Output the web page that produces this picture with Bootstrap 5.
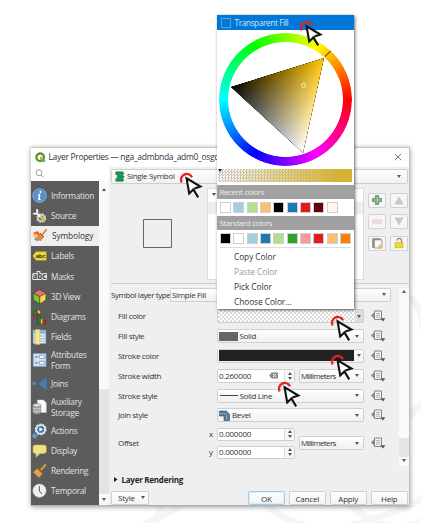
<!DOCTYPE html>
<html lang="en">
<head>
<meta charset="utf-8">
<title>Layer Properties</title>
<link rel="stylesheet" href="https://cdn.jsdelivr.net/npm/bootstrap@5.3.0/dist/css/bootstrap.min.css">
<style>
body{width:421px;height:523px;overflow:hidden;background:#fff;font-family:"Open Sans","Noto Sans",sans-serif;font-size:8px;line-height:10px;color:#333;letter-spacing:-.32px}
svg{display:block;flex:none}
.stage{width:421px;height:523px;padding:147px 0 0 31px}
.backdrop{left:0;top:0}
.win{width:379px;height:359px;background:#efefef;box-shadow:0 1px 5px rgba(0,0,0,.4);border-bottom:1px solid #b8b09a;border-right:1px solid #c4c0b4;border-top:1px solid #cbc5b5}
.titlebar{height:19px;background:#fff;padding:0 9px 0 4px;font-size:8.5px;letter-spacing:-.32px;color:#333}
.side{width:78px}
.search{height:14px;background:#fff;padding-left:4px}
.items{width:68px;background:#5c5c5c;color:#e2e2e2;padding-top:5px;font-size:8.3px;line-height:11.5px;letter-spacing:-.27px}
.items>div{height:20.2px;display:flex;align-items:center;gap:4px;padding-left:1px}
.items>div.two{height:26.7px}
.items>div.on{background:#efefef;color:#333;gap:5px;letter-spacing:-.1px}
.sbar{width:10px;background:#fafafa}
.thumb{background:#e4e4e4}
.arr{width:0;height:0;border:2.6px solid transparent;border-bottom:0;border-top:3.6px solid #555;flex:none}
.arr.up{border-top:0;border-bottom:3.6px solid #555}
.ctl{height:14px;border:1px solid #cfcfcf;border-radius:1.5px;background:linear-gradient(#fefefe,#f1f1f1);display:flex;align-items:center;padding:0 4px 0 1px;white-space:nowrap}
.ctl .arr{margin-left:auto}
.w-full{width:147px}
.rowf{height:19.8px;display:flex;align-items:center}
.lab{width:106px;padding-left:7px}
.spin{width:78px;height:13.5px;background:#fff;border:1px solid #cfcfcf;border-radius:1.5px;display:flex;align-items:center;padding-left:1px;letter-spacing:-.25px}
.steps{width:10px;height:100%;border-left:1px solid #ddd;margin-left:auto;display:flex;flex-direction:column;align-items:center;justify-content:center;gap:1.6px;background:#f7f7f7}
.steps .arr{border-left-width:2px;border-right-width:2px;border-top-width:3px}
.steps .arr.up{border-top-width:0;border-bottom-width:3px}
.checks{background:repeating-conic-gradient(#dcdcdc 0 25%,#fff 0 50%) 0 0/4px 4px}
.dd{margin-left:7px}
.mm{width:65px;margin-left:4px;letter-spacing:-.62px}
.tree{width:157px;height:92px;background:#fff;border:1px solid #dcdcdc;margin-top:4px;padding-top:13px}
.tree>div{height:12px;background:#eee}
.tools{display:grid;grid-template-columns:18px 18px;grid-auto-rows:15px;gap:6.7px 4px;margin:9px 0 0 4px}
.tools>div{border:1px solid #d2d2d2;border-radius:1px;background:#f6f6f6;display:flex;align-items:center;justify-content:center}
.pbtn{height:14.5px;width:37.5px;border:1px solid #cfcfcf;border-radius:1.5px;background:linear-gradient(#fefefe,#f3f3f3);text-align:center;line-height:13px;letter-spacing:-.2px}
.pbtn.ok{border-color:#9fcdf0;box-shadow:inset 0 0 0 .5px #bfe0f8}
.popup{left:217px;top:15px;width:137px;height:294px;background:#fff;box-shadow:1px 1px 3px rgba(0,0,0,.6);font-size:8.3px;letter-spacing:-.05px}
.pick{height:15px;background:#0078d7;color:#cfe4f7;padding-left:4px;letter-spacing:-.4px}
.pick i{width:10px;height:10px;border:1px solid #5aa0dc;margin-right:3.5px}
.wheelbox{height:139px;position:relative}
.hues{position:absolute;left:2px;top:3px;width:133px;height:133px;border-radius:50%;background:conic-gradient(from 90deg,#f00,#f0f,#00f,#0ff,#0f0,#ff0,#f00);-webkit-mask:radial-gradient(circle,transparent 57px,#000 57.8px);mask:radial-gradient(circle,transparent 57px,#000 57.8px)}
.tri{position:absolute;left:0;top:0;isolation:isolate}
.tri .add{mix-blend-mode:plus-lighter}
.ramp{height:13px;margin:0 2px 0 1px;background:linear-gradient(90deg,rgba(212,178,54,0),#d4b236 90%),repeating-conic-gradient(#c9c9c9 0 25%,#fff 0 50%) 0 0/3px 3px}
.band{height:14px;background:#a0a0a0;color:#ececec;padding-left:2.5px;line-height:13.5px;font-size:8px;letter-spacing:-.42px}
.sw{height:17px;padding:0 0 0 3px;display:flex;gap:2.33px;align-items:center}
.sw i{width:11px;height:11px;border:1px solid #cfcfcf}
.acts>div{height:15.1px;line-height:15px;padding-left:17px}
.cur{width:24px;height:28px}
</style>
<script src="https://cdn.jsdelivr.net/npm/bootstrap@5.3.0/dist/js/bootstrap.bundle.min.js"></script>
</head>
<body>
<svg width="0" height="0" class="position-absolute">
<symbol id="cursor" viewBox="0 0 24 28"><path d="M2.6 11.4A5.6 5.6 0 1 1 13 6.2" fill="none" stroke="#e5221c" stroke-width="2.3"/><path d="M7.6 7.2 10 22l3.6-3.6 4.6 6.8 1.8-1.4-4.6-6.6 5.6-1.6z" fill="#fff"/><path d="M19.2 26.4 14.4 18.4 10.2 22.4 7.6 7.4 21.4 15.6 15.4 17.6" fill="none" stroke="#111" stroke-width="2.1"/></symbol>
<symbol id="dd" viewBox="0 0 15 12"><path d="M0 5.5 3.2 2.2V8.8z" fill="#888"/><path d="M3.5 1H10.5V9.5H3.5z" fill="#f3f3f3" stroke="#858585" stroke-width="1"/><path d="M5 3.5h4M5 5.3h4M5 7.2h4" stroke="#999" stroke-width=".7"/><path d="M9.4 8.2h5L11.9 11.6z" fill="#555"/></symbol>
</svg>

<svg class="backdrop position-absolute" width="421" height="523"><g fill="none" stroke="#f6f6f6" stroke-width="7"><path d="M163 500 152 530M186 503 135 530M400 292Q424 300 425 345M395 430 425 400M262 500Q300 540 360 523T425 494M345 500Q385 540 425 520"/></g></svg>

<div class="stage position-relative">
<div class="win d-flex flex-column">
  <div class="titlebar d-flex align-items-center">
    <svg width="11" height="11" viewBox="0 0 11 11"><circle cx="5.2" cy="5.3" r="3.8" fill="none" stroke="#5b9a33" stroke-width="2.4"/><path d="M5 4.8 7.5 5 10.6 9 8.6 10.6 5.3 7.5z" fill="#72ad3c"/><path d="M5 4.8 7.4 5 8.2 7 6.5 7.7z" fill="#efaa38"/></svg>
    <span class="text-nowrap" style="margin-left:2.5px">Layer Properties — nga_admbnda_adm0_osgc</span>
    <svg class="ms-auto" style="margin-right:-2px" width="8" height="8" viewBox="0 0 8 8"><path d="M.8.8 7.2 7.2M7.2.8.8 7.2" stroke="#555" stroke-width=".8"/></svg>
  </div>
  <div class="d-flex flex-fill">
    <div class="side d-flex flex-column">
      <div class="search d-flex align-items-center"><svg width="9" height="9" viewBox="0 0 9 9"><circle cx="4" cy="3.7" r="2.9" fill="none" stroke="#777" stroke-width=".7"/><path d="M6 6 8.4 8.4" stroke="#777" stroke-width=".8"/></svg></div>
      <div class="d-flex flex-fill">
        <div class="items">
          <div><svg width="15" height="16" viewBox="0 0 15 16"><circle cx="7.6" cy="7.6" r="6.8" fill="#5590cf" stroke="#8db8e2" stroke-width=".8"/><path d="M7.8 6.6 6.8 11.2q.5.8 1.6-.2M6.2 6.8H8" stroke="#fff" stroke-width="1.5" fill="none"/><circle cx="8.5" cy="4" r="1.1" fill="#fff"/></svg><span>Information</span></div>
          <div><svg width="15" height="16" viewBox="0 0 15 16"><circle cx="9.2" cy="10" r="3.7" fill="none" stroke="#ddd" stroke-width="2.4" stroke-dasharray="2 .9"/><circle cx="9.2" cy="10" r="3" fill="none" stroke="#c5ccd2" stroke-width="1.5"/><path d="M1.2 5.2Q4 7 5.6 3.6L4.6 1.2M4.4 5 12.5 13" stroke="#f1f1f1" stroke-width="1.8" fill="none"/><path d="M8.5 8.5 12.5 13.2" stroke="#e5b92b" stroke-width="2.2"/></svg><span>Source</span></div>
          <div class="on"><svg width="15" height="16" viewBox="0 0 15 16"><path d="M1 5 5.5 3 10 8 5 10z" fill="#ef5a50"/><path d="M.8 8.2 4 5.6 8 10 4 12z" fill="#f4cf4b"/><path d="M2 11.5 6 8.8 9.5 11.7 5 13z" fill="#6b9bd0"/><path d="M14.7 1.2 10.3 6.6" stroke="#dc8932" stroke-width="1.7"/><path d="M8 5.2 12 9 8.6 13.2 4.7 10.3z" fill="#e28c3a"/><path d="M8 5.2 12 9" stroke="#854b1b"/></svg><span>Symbology</span></div>
          <div><svg width="15" height="12" viewBox="0 0 15 12"><path d="M.8 6 4 1.8H14.2V10.2H4z" fill="#f3dc32" stroke="#d0ae19" stroke-width=".6"/><text x="3.6" y="8" font-size="6" font-weight="700" fill="#333" textLength="9.5">abc</text></svg><span>Labels</span></div>
          <div><svg width="15" height="12" viewBox="0 0 15 12"><text x=".6" y="8.7" font-size="8.4" font-weight="700" fill="#444" stroke="#e6eaf2" stroke-width="2.2" paint-order="stroke" textLength="13.5" lengthAdjust="spacingAndGlyphs">abc</text></svg><span>Masks</span></div>
          <div><svg width="15" height="16" viewBox="0 0 15 16"><g stroke="#333" stroke-width=".5"><path d="M7.5.8 14 4.2 7.8 7.6 1.2 4.2z" fill="#f36e6b"/><path d="M1.2 4.2 7.8 7.6V15L1.4 11z" fill="#78c637"/><path d="M14 4.2 7.8 7.6V15L13.8 11z" fill="#f5d64c"/></g></svg><span>3D View</span></div>
          <div><svg width="15" height="16" viewBox="0 0 15 16"><g stroke="#3c2c20" stroke-width=".5"><path d="M5 5V.8Q1 1.2 1 5.5Q3 6 5 5z" fill="#17964f"/><path d="M5 .8Q8.8.6 9 4.2L6 5.3z" fill="#f6ce42"/><path d="M1.5 6 5 5 7.5 9.5Q4 11 1.5 6z" fill="#d42c22"/><path d="M5.4 7H8.4V15H5.4z" fill="#16884a"/><path d="M8.4 9.8H11V15.2H8.4z" fill="#f3c62b"/><path d="M11 11.5H13.7V15.2H11z" fill="#d42c22"/></g></svg><span>Diagrams</span></div>
          <div><svg width="15" height="16" viewBox="0 0 15 16"><path d="M1.2 1.3H13.8V14.5H1.2z" fill="#e2ebf5" stroke="#8aa9c8" stroke-width=".6"/><path d="M2 2h11.4v2.6H2z" fill="#83aedb"/><path d="M2 7h11M2 9.5h11M2 12h11" stroke="#9dbbdc"/><path d="M3.5.6H7.8V15.4H3.5z" fill="#f6e988" stroke="#d6bf4d" stroke-width=".5"/></svg><span>Fields</span></div>
          <div class="two"><svg width="15" height="16" viewBox="0 0 15 16"><path d="M1.2 1.5H14V14.5H1.2z" fill="#d6e3f0" stroke="#78a0c7" stroke-width=".9"/><path d="M3 4.8h3M3 10.8h3" stroke="#5e86b0" stroke-width="1.3"/><path d="M7.5 3.3h4.8v3H7.5zM7.5 9.3h4.8v3H7.5z" fill="#fff" stroke="#7798ba" stroke-width=".8"/></svg><span>Attributes<br>Form</span></div>
          <div><svg width="15" height="16" viewBox="0 0 15 16"><circle cx="2" cy="7.5" r="1.7" fill="#4c8ac6"/><path d="M14.7 1.5V14L6.2 7.7z" fill="#407fbd"/></svg><span>Joins</span></div>
          <div class="two"><svg width="15" height="16" viewBox="0 0 15 16"><path d="M5.5 1H11.4L14.3 3.8V13.5H5.5z" fill="#fafafa" stroke="#ccc" stroke-width=".5"/><path d="M.8 6.2V14Q4.8 16.4 8.8 14V6.2z" fill="#a3a3a3" stroke="#666" stroke-width=".5"/><ellipse cx="4.8" cy="6.2" rx="4" ry="1.7" fill="#ddd" stroke="#777" stroke-width=".5"/><path d="M.8 9.2q4 2 8 0M.8 12q4 2 8 0" stroke="#ddd" stroke-width=".7" fill="none"/></svg><span>Auxiliary<br>Storage</span></div>
          <div><svg width="15" height="16" viewBox="0 0 15 16"><circle cx="8.7" cy="6.4" r="5.2" fill="#dce8f2" stroke="#dce8f2" stroke-width="1.5" stroke-dasharray="2 1.2"/><circle cx="8.7" cy="6.4" r="3.4" fill="#3d78b8"/><path d="M7.4 4.3 11 6.4 7.4 8.5z" fill="#fff"/><circle cx="2.8" cy="12.9" r="2" fill="#5a99ce" stroke="#82b3dc" stroke-dasharray="1 .5"/></svg><span>Actions</span></div>
          <div><svg width="15" height="16" viewBox="0 0 15 16"><path d="M3 2H12Q14.3 2 14.3 4V8.6Q14.3 10.4 12 10.4H8L4 14.3V10.4H3Q1 10.4 1 8.6V4Q1 2 3 2z" fill="#f0e183" stroke="#cdb94f" stroke-width=".6"/></svg><span>Display</span></div>
          <div><svg width="15" height="16" viewBox="0 0 15 16"><path d="M13.8 1.5 8.8 7" stroke="#e09a45" stroke-width="2"/><path d="M5.5 5.2 10.8 10.3 7 14.8 1.2 9.3z" fill="#e7a04c"/><path d="M5.3 5.2 10.8 10.3" stroke="#955e22" stroke-width="1.2"/></svg><span>Rendering</span></div>
          <div><svg width="15" height="16" viewBox="0 0 15 16"><circle cx="7.5" cy="7.7" r="6.6" fill="#f0f0f0" stroke="#c4c4c4" stroke-width=".7"/><path d="M7.4 3.2V8L9.8 11" stroke="#555" stroke-width="1" fill="none"/></svg><span>Temporal</span></div>
        </div>
        <div class="sbar d-flex flex-column align-items-center"><div class="arr up" style="margin-top:7px"></div><div class="thumb w-100 mt-auto" style="height:105px"></div><div class="arr my-1"></div></div>
      </div>
    </div>

    <div class="flex-fill" style="padding-left:2px">
      <div class="ctl" style="width:297px;margin-top:2px;padding:0 6px 0 3px;height:15px"><svg style="margin-right:2px" width="10" height="11" viewBox="0 0 10 11"><path d="M.8.8H7.8L9 2.5 7.8 3.8H.8zM2.2 4.3H8L9.4 5.7 8 7H2.2zM.8 7.5H7.8L9 9 7.8 10.3H.8z" fill="#129653" stroke="#0a7039" stroke-width=".5"/></svg>Single Symbol<div class="arr"></div></div>
      <div class="d-flex" style="height:99px">
        <div class="d-flex align-items-center justify-content-center" style="width:96px;padding-right:3px"><svg width="29" height="29"><path d="M.5.5h28v28H.5z" fill="none" stroke="#666"/></svg></div>
        <div class="tree position-relative"><div></div><span class="arr position-absolute" style="left:4px;top:4px"></span></div>
        <div class="tools">
          <div><svg width="10" height="10" viewBox="0 0 10 10"><path d="M3.4.5h3.2v2.9h2.9v3.2H6.6v2.9H3.4V6.6H.5V3.4h2.9z" fill="#74ad7c" stroke="#4a8c58" stroke-width=".7"/><path d="M5 2v6M2 5h6" stroke="#b7d8b8" stroke-width=".7"/></svg></div>
          <div><svg width="10" height="9"><path d="M5 .5 9.7 8.5H.3z" fill="#c6c8ca"/></svg></div>
          <div><svg width="10" height="5"><path d="M.5.8h9v3.4h-9z" fill="#f2dede" stroke="#e6c9cb" stroke-width=".7"/></svg></div>
          <div><svg width="10" height="9"><path d="M.3.5H9.7L5 8.5z" fill="#c6c8ca"/></svg></div>
          <div><svg width="11" height="11" viewBox="0 0 11 11"><path d="M.7.7h7.5v8.8H.7z" fill="#999" stroke="#777" stroke-width=".7"/><path d="M2.3 1.8H10V10H2.3z" fill="#f8f8f8" stroke="#777" stroke-width=".7"/><circle cx="8.3" cy="8.4" r="2" fill="#ebc53d"/></svg></div>
          <div><svg width="10" height="12" viewBox="0 0 10 12"><path d="M3 3.6Q3.2 1.2 5.4 1.3 7.5 1.5 7.5 3.4V6" fill="none" stroke="#8c8c8c" stroke-width="1.3"/><path d="M1 5.7h8v5H1z" fill="#f2d827" stroke="#c8a915" stroke-width=".6"/></svg></div>
        </div>
      </div>
      <div style="border-top:1px solid #cfcfcf;height:5px"></div>
      <div class="d-flex" style="height:178px">
        <div style="width:288px">
          <div class="d-flex align-items-center" style="height:14px;margin-bottom:5px"><span style="width:59px;letter-spacing:-.4px" class="text-nowrap">Symbol layer type</span><div class="ctl" style="width:221px">Simple Fill<div class="arr"></div></div></div>
          <div class="rowf"><div class="lab">Fill color</div><div class="ctl w-full p-0"><div class="checks h-100" style="width:137px"></div><div class="h-100 flex-fill d-flex align-items-center justify-content-center" style="background:#dcdcdc"><div class="arr m-0"></div></div></div><svg class="dd" width="15" height="12"><use href="#dd"/></svg></div>
          <div class="rowf"><div class="lab">Fill style</div><div class="ctl w-full"><svg width="19" height="9" style="margin-right:1.5px"><path d="M0 0h19v9H0z" fill="#666"/></svg>Solid<div class="arr"></div></div><svg class="dd" width="15" height="12"><use href="#dd"/></svg></div>
          <div class="rowf"><div class="lab">Stroke color</div><div class="ctl w-full p-0"><div style="width:135px;height:11px;background:#222;margin-left:1px"></div><div class="flex-fill d-flex justify-content-center"><div class="arr m-0"></div></div></div><svg class="dd" width="15" height="12"><use href="#dd"/></svg></div>
          <div class="rowf"><div class="lab">Stroke width</div><div class="spin">0.260000<svg class="ms-auto" width="9" height="7" viewBox="0 0 9 7"><path d="M0 3.5 2.7.5H9v6H2.7z" fill="#8b8b8b"/><path d="M4 2l3 3M7 2 4 5" stroke="#fff" stroke-width=".9"/></svg><div class="steps" style="margin-left:6px"><div class="arr up"></div><div class="arr"></div></div></div><div class="ctl mm">Millimeters<div class="arr"></div></div><svg class="dd" width="15" height="12"><use href="#dd"/></svg></div>
          <div class="rowf"><div class="lab">Stroke style</div><div class="ctl w-full"><svg width="19" height="3" style="margin-right:1.5px"><path d="M1 1.5h18" stroke="#444"/></svg>Solid Line<div class="arr"></div></div><svg class="dd" width="15" height="12"><use href="#dd"/></svg></div>
          <div class="rowf"><div class="lab">Join style</div><div class="ctl w-full"><svg width="11" height="11" viewBox="0 0 11 11" style="margin-right:2px"><path d="M.5 1H7.3L10.5 4.2V10.5H5V6H.5z" fill="#4d78a8" stroke="#234c78" stroke-width=".6"/><path d="M1 3.5H6L7.8 5V10" fill="none" stroke="#e2ce55" stroke-dasharray="1.3 .8"/></svg>Bevel<div class="arr"></div></div><svg class="dd" width="15" height="12"><use href="#dd"/></svg></div>
          <div class="d-flex align-items-center" style="height:36px"><div class="lab" style="width:98px">Offset</div>
            <div class="d-flex flex-column" style="gap:4.5px"><div class="d-flex align-items-center"><span style="width:8px">x</span><div class="spin">0.000000<div class="steps"><div class="arr up"></div><div class="arr"></div></div></div></div><div class="d-flex align-items-center"><span style="width:8px">y</span><div class="spin">0.000000<div class="steps"><div class="arr up"></div><div class="arr"></div></div></div></div></div>
            <div class="ctl mm">Millimeters<div class="arr"></div></div><svg class="dd" width="15" height="12"><use href="#dd"/></svg></div>
        </div>
        <div class="sbar d-flex flex-column align-items-center"><div class="arr up" style="margin-top:2.5px"></div><div class="thumb w-100 mt-auto" style="height:19px"></div><div class="arr" style="margin:2px 0 4px"></div></div>
      </div>
      <div class="d-flex align-items-center fw-bold text-dark" style="height:25px;padding:3px 0 0 3px;letter-spacing:-.25px"><svg width="4" height="5" style="margin-right:3.5px"><path d="M0 0 3.6 2.5 0 5z" fill="#222"/></svg>Layer Rendering</div>
      <div class="d-flex align-items-center" style="gap:3.5px"><div class="pbtn d-flex align-items-center me-auto" style="padding:0 2.5px 0 6px">Style<div class="arr ms-auto"></div></div><div class="pbtn ok">OK</div><div class="pbtn">Cancel</div><div class="pbtn">Apply</div><div class="pbtn" style="margin-right:1px">Help</div></div>
    </div>
  </div>
</div>

<div class="popup position-absolute">
  <div class="pick d-flex align-items-center"><i></i>Transparent Fill</div>
  <div class="wheelbox"><div class="hues"></div>
    <svg class="tri" width="137" height="139" viewBox="217 30 137 139">
      <defs><linearGradient id="gh" gradientUnits="userSpaceOnUse" x1="267.1" y1="120.1" x2="324" y2="58"><stop stop-color="#000"/><stop offset="1" stop-color="#ffc400"/></linearGradient><linearGradient id="gw" gradientUnits="userSpaceOnUse" x1="277.9" y1="72.4" x2="303" y2="153"><stop stop-color="#000"/><stop offset="1" stop-color="#fff"/></linearGradient></defs>
      <path d="M324 58 231 87 303 153z" fill="url(#gh)"/><path class="add" d="M324 58 231 87 303 153z" fill="url(#gw)"/>
      <circle cx="303.5" cy="85.3" r="2" fill="none" stroke="#fff3c8" stroke-width=".9"/><path d="M325 56.5 330.7 51" stroke="#111" stroke-width="1"/></svg></div>
  <div class="ramp"><svg width="5" height="4"><path d="M0 0h4L2 3z" fill="#222"/></svg></div>
  <div class="band" style="margin-top:3px">Recent colors</div>
  <div class="sw"><i style="background:#fff"></i><i style="background:#a6cee3"></i><i style="background:#b2df8a"></i><i style="background:#fdbf6f"></i><i style="background:#000"></i><i style="background:#1f78b4"></i><i style="background:#e31a1c"></i><i style="background:#67000d"></i><i style="background:#fff5f0"></i></div>
  <div class="band">Standard colors</div>
  <div class="sw"><i style="background:#000"></i><i style="background:#fff"></i><i style="background:#a6cee3"></i><i style="background:#1f78b4"></i><i style="background:#b2df8a"></i><i style="background:#33a02c"></i><i style="background:#fb9a99"></i><i style="background:#e31a1c"></i><i style="background:#fdbf6f"></i><i style="background:#ff7f00"></i></div>
  <div style="border-top:1px solid #ddd;margin:0 3px 1px"></div>
  <div class="acts"><div>Copy Color</div><div style="color:#999">Paste Color</div><div>Pick Color</div><div>Choose Color...</div></div>
</div>

<svg class="cur position-absolute" style="left:299px;top:19px"><use href="#cursor"/></svg>
<svg class="cur position-absolute" style="left:179px;top:171px"><use href="#cursor"/></svg>
<svg class="cur position-absolute" style="left:330px;top:314px"><use href="#cursor"/></svg>
<svg class="cur position-absolute" style="left:330px;top:353px"><use href="#cursor"/></svg>
<svg class="cur position-absolute" style="left:277px;top:380px"><use href="#cursor"/></svg>
</div>
</body>
</html>
